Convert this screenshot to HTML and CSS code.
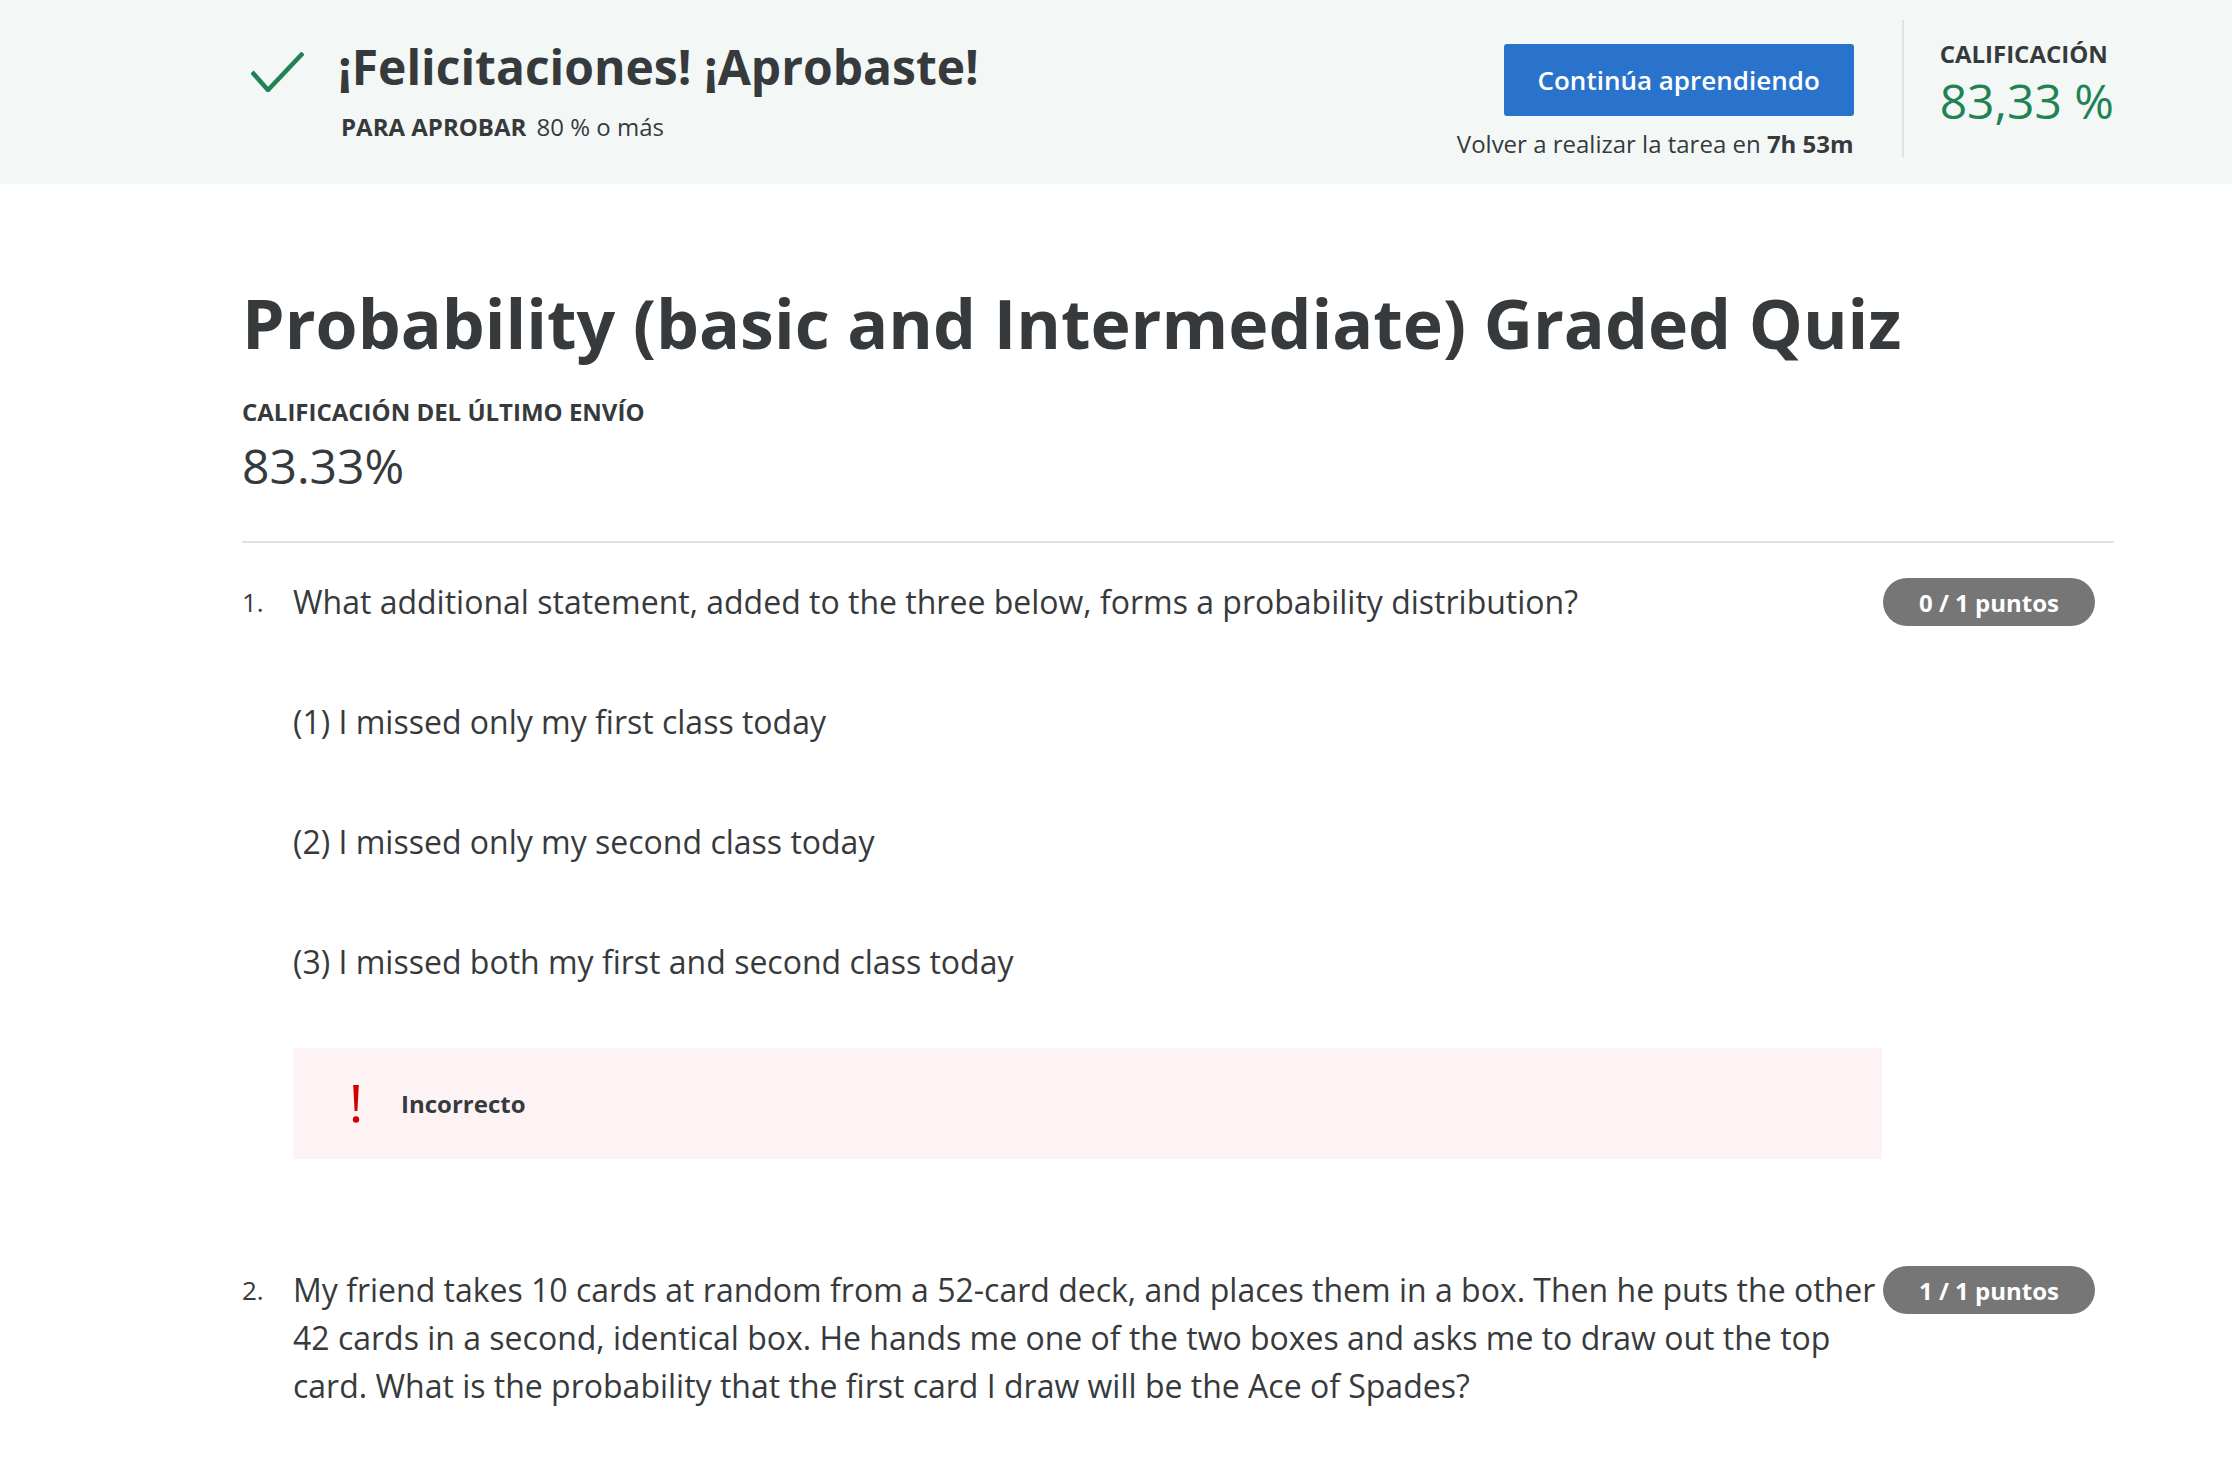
FILE: index.html
```html
<!DOCTYPE html>
<html lang="es">
<head>
<meta charset="utf-8">
<title>Probability Graded Quiz</title>
<link rel="stylesheet" href="styles.css">
</head>
<body>
<header class="banner">
  <svg class="check" width="53" height="40" viewBox="0 0 53 40" aria-hidden="true">
    <polyline points="1,20 17,38 52,1" fill="none" stroke="#1f8354" stroke-width="4.5"/>
  </svg>
  <div class="banner-text">
    <h2 class="banner-title">¡Felicitaciones! ¡Aprobaste!</h2>
    <div class="pass-line"><span class="pass-label">PARA APROBAR</span> 80 % o más</div>
  </div>
  <div class="actions">
    <button class="btn-primary">Continúa aprendiendo</button>
    <div class="retry">Volver a realizar la tarea en <strong>7h 53m</strong></div>
  </div>
  <div class="divider"></div>
  <div class="grade">
    <div class="grade-label">CALIFICACIÓN</div>
    <div class="grade-value">83,33 %</div>
  </div>
</header>

<main class="content">
  <h1 class="quiz-title">Probability (basic and Intermediate) Graded Quiz</h1>
  <div class="last-label">CALIFICACIÓN DEL ÚLTIMO ENVÍO</div>
  <div class="last-score">83.33%</div>
  <hr class="rule">

  <section class="question q-first">
    <div class="qnum">1.</div>
    <div class="qbody">
      <p>What additional statement, added to the three below, forms a probability distribution?</p>
      <p class="opt">(1) I missed only my first class today</p>
      <p class="opt">(2) I missed only my second class today</p>
      <p class="opt">(3) I missed both my first and second class today</p>
      <div class="feedback">
        <svg class="bang" width="10" height="38" viewBox="0 0 10 38" aria-hidden="true">
          <polygon points="2.2,0 7.8,0 6.4,26 3.6,26" fill="#d30001"/>
          <circle cx="5" cy="34.5" r="3.2" fill="#d30001"/>
        </svg>
        <span class="fb-text">Incorrecto</span>
      </div>
    </div>
    <div class="badge">0 / 1 puntos</div>
  </section>

  <section class="question q-second">
    <div class="qnum">2.</div>
    <div class="qbody">
      <p>My friend takes 10 cards at random from a 52-card deck, and places them in a box. Then he puts the other 42 cards in a second, identical box. He hands me one of the two boxes and asks me to draw out the top card. What is the probability that the first card I draw will be the Ace of Spades?</p>
    </div>
    <div class="badge">1 / 1 puntos</div>
  </section>
</main>
</body>
</html>
```

FILE: styles.css
```css
* { box-sizing: border-box; }

html, body {
  margin: 0;
  padding: 0;
  background: #ffffff;
}

body {
  font-family: "Open Sans", "Liberation Sans", sans-serif;
  color: #373a3c;
  overflow: hidden;
}

/* ---------- banner ---------- */
.banner {
  display: flex;
  align-items: flex-start;
  height: 184px;
  background: #f3f8f6;
  padding: 0 118px 0 251px;
}

.check {
  margin-top: 52px;
  flex: none;
}

.banner-text {
  margin-left: 34px;
  padding-top: 35px;
}

.banner-title {
  margin: 0;
  font-size: 48px;
  line-height: 64px;
  font-weight: 700;
  color: #373a3c;
}

.pass-line {
  margin-top: 13px;
  padding-left: 3px;
  font-size: 24px;
  line-height: 30px;
  color: #373a3c;
}

.pass-label {
  font-weight: 700;
  margin-right: 4px;
}

.actions {
  margin-left: auto;
  padding-top: 44px;
  display: flex;
  flex-direction: column;
  align-items: flex-end;
}

.btn-primary {
  width: 350px;
  height: 72px;
  border: none;
  border-radius: 3px;
  background: #2a73cc;
  color: #ffffff;
  font-family: "Open Sans", "Liberation Sans", sans-serif;
  font-size: 26px;
  font-weight: 600;
  padding: 0;
}

.retry {
  margin-top: 13px;
  font-size: 24px;
  line-height: 30px;
  color: #373a3c;
}

.retry strong { font-weight: 700; }

.divider {
  flex: none;
  width: 2px;
  height: 137px;
  margin: 20px 36px 0 48px;
  background: #e1e3e3;
}

.grade {
  padding-top: 39px;
}

.grade-label {
  font-size: 24px;
  line-height: 30px;
  font-weight: 700;
  color: #373a3c;
}

.grade-value {
  margin-top: 10px;
  font-size: 48px;
  line-height: 44px;
  color: #1f8354;
  font-weight: 400;
}

/* ---------- main ---------- */
.content {
  padding: 0 118px 0 242px;
}

.quiz-title {
  margin: 99px 0 0;
  font-size: 68px;
  line-height: 80px;
  font-weight: 700;
  color: #373a3c;
}

.last-label {
  margin-top: 34px;
  font-size: 24px;
  line-height: 30px;
  font-weight: 700;
}

.last-score {
  margin-top: 9px;
  font-size: 48px;
  line-height: 60px;
  font-weight: 400;
}

.rule {
  margin: 45px 0 0;
  border: none;
  border-top: 2px solid #e1e1e1;
  height: 0;
}

.question {
  display: flex;
  align-items: flex-start;
}

.q-first { margin-top: 35px; }
.q-second { margin-top: 107px; }

.qnum {
  flex: none;
  width: 51px;
  font-size: 26px;
  line-height: 48px;
}

.qbody {
  flex: none;
  width: 1589px;
  font-size: 32px;
  line-height: 48px;
  color: #373a3c;
}

.qbody p { margin: 0; }
.qbody p.opt { margin-top: 72px; }

.feedback {
  margin-top: 62px;
  height: 111px;
  background: #fdf2f4;
  display: flex;
  align-items: center;
  padding-left: 58px;
}

.bang { flex: none; }

.fb-text {
  margin-left: 40px;
  font-size: 24px;
  font-weight: 700;
  line-height: 30px;
}

.badge {
  flex: none;
  margin-left: 1px;
  width: 212px;
  height: 48px;
  border-radius: 24px;
  background: #767676;
  color: #ffffff;
  font-size: 24px;
  font-weight: 700;
  display: flex;
  align-items: center;
  justify-content: center;
}
```
